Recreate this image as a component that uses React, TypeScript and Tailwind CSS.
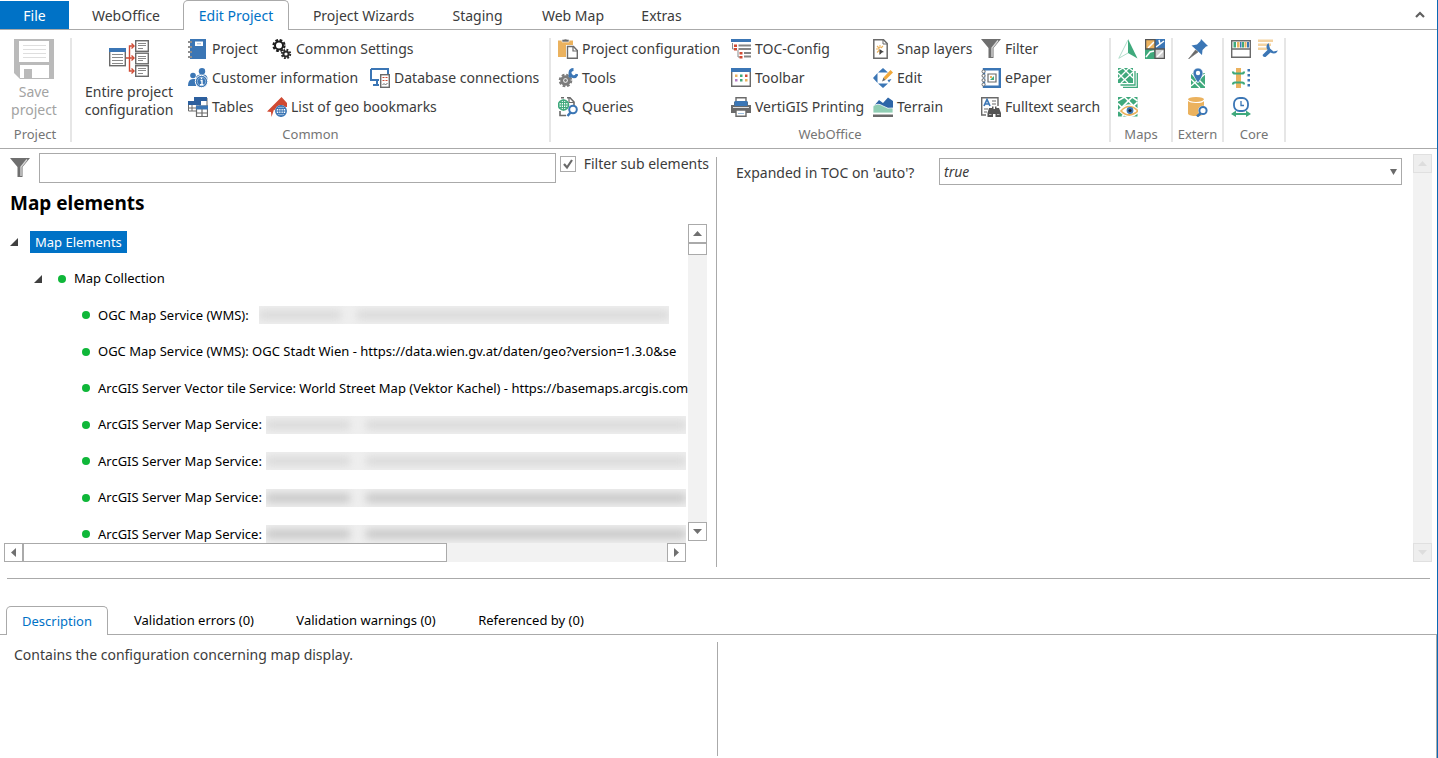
import React, { useState } from "react";

const BLUE = "#3b76b5";
const GRAY = "#6a6a6a";
const GREEN = "#3fa97c";
const ORANGE = "#ebb25e";
const RED = "#d04a33";

type Children = { children: React.ReactNode };

function Icon({ children }: Children) {
  return (
    <svg viewBox="0 0 20 20" className="size-5 shrink-0" aria-hidden="true">
      {children}
    </svg>
  );
}

function Gear({ cx, cy, r, color, dash }: { cx: number; cy: number; r: number; color: string; dash: string }) {
  return (
    <g fill="none" stroke={color}>
      <circle cx={cx} cy={cy} r={r} strokeWidth={2} />
      <circle cx={cx} cy={cy} r={r + 1.6} strokeWidth={2} strokeDasharray={dash} />
    </g>
  );
}

function SaveIcon() {
  return (
    <svg viewBox="0 0 40 40" className="size-10" aria-hidden="true">
      <path d="M0 0H40V40H6L0 34Z" fill="#bababa" />
      <path d="M5 2H35V23H5Z" fill="#fff" />
      <path d="M9 6.500H32M9 10.500H32M9 14.500H32M9 18.500H32" stroke="#dedede" strokeWidth="1.200" />
      <path d="M6 26H35V39H6Z" fill="#fff" />
      <path d="M10 30H18V39H10Z" fill="#bababa" />
    </svg>
  );
}

function TreeConfigIcon() {
  return (
    <svg viewBox="0 0 40 40" className="size-10" aria-hidden="true">
      <rect x="0.700" y="8.700" width="15.600" height="17" fill="#fff" stroke={GRAY} strokeWidth="1.400" />
      <path d="M0 8H17V12H0Z" fill={BLUE} />
      <path d="M3 14.500H14M3 17.500H14M3 20.500H14M3 23.500H14" stroke="#8a8a8a" />
      <g fill="none" stroke={RED} strokeWidth="1.400">
        <path d="M17 18H25M20.500 18V6H25M20.500 18V31H25" />
        <path d="M22.500 3.500L25 6L22.500 8.500M22.500 15.500L25 18L22.500 20.500M22.500 28.500L25 31L22.500 33.500" />
      </g>
      <g fill="#fff" stroke={GRAY} strokeWidth="1.400">
        <rect x="26.700" y="0.700" width="12.600" height="10.600" />
        <rect x="26.700" y="13.200" width="12.600" height="10.600" />
        <rect x="26.700" y="25.700" width="12.600" height="10.600" />
      </g>
      <path d="M29 3.500H37M29 5.500H37M29 8.500H34M29 16.500H37M29 18.500H37M29 20.500H34M29 28.500H37M29 30.500H37M29 33.500H34" stroke="#8a8a8a" />
    </svg>
  );
}

const MapTile = () => (
  <g>
    <path d="M0 0H15V15H0Z" fill={GREEN} />
    <path d="M0 3L5 0M0 11L11 0M3 15L15 4M0 5L10 15M5 0L15 10M11 0L15 3" stroke="#fff" strokeWidth="1.300" />
  </g>
);

const icons = {
  project: (
    <Icon>
      <path d="M2 0H18V20H2Z" fill={BLUE} />
      <path d="M7 2.500H15V7H7Z" fill="#fff" />
      <path d="M9 4.800H13" stroke="#9db9d8" />
      <path d="M2 2V4M2 7V9M2 12V14M2 17V19" stroke="#fff" strokeWidth="4" />
      <path d="M0 3H4M0 8H4M0 13H4M0 18H4" stroke={GRAY} strokeWidth="1.400" />
    </Icon>
  ),
  settings: (
    <Icon>
      <Gear cx={7} cy={6.5} r={4} color="#1c1c1c" dash="2.700 1.700" />
      <Gear cx={14} cy={15} r={2.6} color="#2a2a2a" dash="1.800 1.500" />
    </Icon>
  ),
  customer: (
    <Icon>
      <circle cx="14" cy="3.200" r="3.200" fill={BLUE} />
      <path d="M8 9Q9 6.500 12 6.500H16Q19.500 7 19.500 11V14H8Z" fill={BLUE} />
      <circle cx="5" cy="7.500" r="2.800" fill={BLUE} />
      <path d="M0 18Q0 11 5 11H8V18Z" fill={BLUE} />
      <circle cx="13.500" cy="13.500" r="6.200" fill={BLUE} stroke="#fff" />
      <circle cx="13.500" cy="13.500" r="4.200" fill="none" stroke="#9fc0e0" strokeWidth="0.800" />
      <path d="M12.500 12.500H14V16.500M12 16.700H15.500M13.500 9.500V11" stroke="#fff" strokeWidth="1.400" fill="none" />
    </Icon>
  ),
  database: (
    <Icon>
      <path d="M1 1H18V6M1 1V12H9M7 12V16M3 17H9" fill="none" stroke={BLUE} strokeWidth="2" />
      <rect x="10.700" y="6.700" width="8.600" height="12.600" fill="#fff" stroke={GRAY} strokeWidth="1.400" />
      <path d="M12.500 9.500H17.500M12.500 12.500H17.500" stroke={RED} strokeWidth="1.200" strokeDasharray="2 1" />
      <path d="M12.500 17L14 15.500L15.500 17L17.500 15" stroke={GRAY} fill="none" />
    </Icon>
  ),
  tables: (
    <Icon>
      <path d="M6.500 1H19V10H6.500Z" fill="#fff" stroke={GRAY} />
      <path d="M6 0H19V4H6Z" fill="#2c5f9e" />
      <path d="M0.500 5H12V14H0.500Z" fill="#fff" stroke={GRAY} />
      <path d="M0 4H13V8H0Z" fill="#2c5f9e" />
      <path d="M0 11H9M4 8V14" stroke={GRAY} />
      <path d="M8.500 9H19.500V19.500H8.500Z" fill="#fff" stroke={GRAY} strokeWidth="1.200" />
      <path d="M8 8.500H20V12.500H8Z" fill={BLUE} />
      <path d="M8 16H20M14 12V20" stroke={GRAY} strokeWidth="1.200" />
    </Icon>
  ),
  bookmark: (
    <Icon>
      <path d="M14.500 0L20 6V10L12 10L9 14L7 12.500L4.500 20L4 15L0 14.500Z" fill={RED} />
      <circle cx="14" cy="14" r="6" fill="#fff" />
      <circle cx="14" cy="14" r="5.200" fill="none" stroke={BLUE} strokeWidth="1.500" />
      <ellipse cx="14" cy="14" rx="2.300" ry="5.200" fill="none" stroke={BLUE} />
      <path d="M14 9V19M9 14H19M10 11.500H18M10 16.500H18" stroke={BLUE} strokeWidth="1.100" />
    </Icon>
  ),
  paste: (
    <Icon>
      <path d="M0 1.500H15V18H0Z" fill={ORANGE} />
      <path d="M4 3V1.500Q4 0 7.500 0Q11 0 11 1.500V3Z" fill={GRAY} stroke="#fff" strokeWidth="0.600" />
      <path d="M8 6H20V20H8Z" fill="#fff" />
      <path d="M9.500 7.500H15.500L19.300 11.500V19.300H9.500Z" fill="#fff" stroke={GRAY} strokeWidth="1.400" />
      <path d="M15 7.500V12H19.500" fill="none" stroke={GRAY} strokeWidth="1.200" />
    </Icon>
  ),
  tools: (
    <Icon>
      <circle cx="7.500" cy="12.500" r="3.800" fill="#fff" stroke="#7b7b7b" strokeWidth="3" />
      <circle cx="7.500" cy="12.500" r="5.800" fill="none" stroke="#7b7b7b" strokeWidth="2" strokeDasharray="2.700 1.860" />
      <circle cx="7.500" cy="12.500" r="1.400" fill="#7b7b7b" />
      <path d="M11 9L14 6" stroke={BLUE} strokeWidth="2.500" />
      <path d="M15.500 1.500A3.600 3.600 0 1 0 19 6" fill="none" stroke={BLUE} strokeWidth="2.800" />
    </Icon>
  ),
  queries: (
    <Icon>
      <path d="M9 0.800H12L16 5V9M2 14V18.500H8M3 0.800H6" fill="none" stroke={GRAY} strokeWidth="1.600" />
      <path d="M11 0.800V5.500H16" fill="none" stroke={GRAY} strokeWidth="1.200" />
      <circle cx="5.500" cy="8" r="5" fill="#fff" stroke={GREEN} strokeWidth="1.600" />
      <path d="M5.500 3V13M0.500 8H10.500M1.500 5.500H9.500M1.500 10.500H9.500" stroke={GREEN} />
      <ellipse cx="5.500" cy="8" rx="2.300" ry="5" fill="none" stroke={GREEN} />
      <circle cx="15" cy="12.500" r="3.800" fill="#fff" stroke={BLUE} strokeWidth="2" />
      <path d="M12.500 15.500L9.500 19" stroke={BLUE} strokeWidth="2.600" />
    </Icon>
  ),
  toc: (
    <Icon>
      <path d="M0 0H20V3H0Z" fill={BLUE} />
      <path d="M1.500 4V10H3M7 11V18H9" fill="none" stroke="#8a8a8a" />
      <path d="M7.500 6.500H20M7.500 10H20M13 14H20M13 17.500H20" stroke="#858585" strokeWidth="1.900" />
      <path d="M3 5.500H6V8H3ZM3 9H6V11.500H3ZM8.500 13H11.500V15.500H8.500ZM8.500 17H11.500V19.500H8.500Z" fill={RED} />
    </Icon>
  ),
  toolbar: (
    <Icon>
      <path d="M0.700 1H19.300V18.300H0.700Z" fill="#fff" stroke={GRAY} strokeWidth="1.400" />
      <path d="M0 0H20V4H0Z" fill={BLUE} />
      <path d="M4 6.500H6.500V9H4ZM14 11H16.500V13.500H14Z" fill={ORANGE} />
      <path d="M9 6.500H11.500V9H9ZM9 11H11.500V13.500H9Z" fill={GREEN} />
      <path d="M14 6.500H16.500V9H14Z" fill={RED} />
      <path d="M4 11H6.500V13.500H4Z" fill="#b57bc4" />
    </Icon>
  ),
  printer: (
    <Icon>
      <path d="M5 0.700H15V5H5Z" fill="#fff" stroke={GRAY} strokeWidth="1.400" />
      <path d="M0 8H3V5H17V8H20V16H0Z" fill={GRAY} />
      <path d="M3.500 4H16.500V9H3.500Z" fill={BLUE} />
      <path d="M2 10.500H18" stroke="#fff" strokeWidth="0.800" />
      <path d="M5 13H15V19.300H5Z" fill="#fff" stroke={GRAY} strokeWidth="1.400" />
      <path d="M7 16.500H13" stroke="#9fc0e0" />
    </Icon>
  ),
  snap: (
    <Icon>
      <path d="M0.800 0.800H10.500L14.200 4.500V19.200H0.800Z" fill="#fff" stroke={GRAY} strokeWidth="1.500" />
      <path d="M10 1V5H14" fill="none" stroke={GRAY} />
      <path d="M7 6V9M3 10H6M4 7L6.500 9.500M10 7L8 9M4 13.500L6.500 11M7 12V15" stroke={ORANGE} strokeWidth="1.100" />
      <path d="M6.500 10L11 13L9 13.500L6.500 16Z" fill="#444" />
    </Icon>
  ),
  edit: (
    <Icon>
      <path d="M10 0L15 4.500H5ZM0 10L4.500 5V15ZM10 20L5 15.500H15Z" fill={BLUE} />
      <path d="M18.500 11L16 14.500L14.500 12Z" fill={BLUE} />
      <path d="M10.500 9.500L17.500 2L20 4.500L12.500 12Z" fill="#f2a93b" />
      <path d="M10.500 9.500L12.500 12L9 13.500Z" fill={GRAY} />
    </Icon>
  ),
  terrain: (
    <Icon>
      <path d="M0 10L6 3L10 6L15 0.500L20 4V12H0Z" fill="#2e66a8" />
      <path d="M0 9Q5 5.500 10 9T20 11V16H0Z" fill="#8fcdb3" stroke="#fff" strokeWidth="0.800" />
      <path d="M0 17.500H20V20H0Z" fill={GRAY} />
    </Icon>
  ),
  filter: (
    <Icon>
      <path d="M0 0H20L12.500 9V19H7.500V9Z" fill="#6f6f6f" />
      <path d="M17 1.500L11 9V18" fill="none" stroke="#d5d5d5" strokeWidth="1.400" />
    </Icon>
  ),
  epaper: (
    <Icon>
      <path d="M3 1.200H18.800V18.800H3Z" fill="#fff" stroke={BLUE} strokeWidth="2.400" />
      <path d="M1 3.500H4M1 8H4M1 12H4M1 16.500H4" stroke="#fff" strokeWidth="3" />
      <g fill="#fff" stroke={GRAY}>
        <circle cx="2.500" cy="3.500" r="1.500" />
        <circle cx="2.500" cy="7.800" r="1.500" />
        <circle cx="2.500" cy="12.200" r="1.500" />
        <circle cx="2.500" cy="16.500" r="1.500" />
      </g>
      <path d="M7 6H15V14H7Z" fill="#fff" stroke={GRAY} strokeWidth="1.200" />
      <path d="M9 8H11V10H9Z" fill={ORANGE} />
      <path d="M11 10L13 8V12H9Z" fill={GREEN} />
    </Icon>
  ),
  fulltext: (
    <Icon>
      <path d="M17 9V0.700H0.700V18H5" fill="#fff" stroke={GRAY} strokeWidth="1.400" />
      <path d="M3 9L6 2.500L9 9M4 7H8" fill="none" stroke={BLUE} strokeWidth="1.700" />
      <path d="M11 4H15M11 7H15M3 12H7M3 15H6" stroke={GRAY} strokeWidth="1.100" />
      <path d="M8 11H11V9.500H12.500V12H14V9.500H15.500V11H18L20 16V20H14.500V17H12V20H6.500V16Z" fill="#555" />
      <path d="M8 17.500H10.500M16 17.500H18.500" stroke="#bbb" />
    </Icon>
  ),
  north: (
    <Icon>
      <path d="M10 0L19.500 19.500L10 14Z" fill={GREEN} />
      <path d="M10 1L0.800 19.300L10 14" fill="none" stroke="#a8d9c5" strokeWidth="0.900" />
    </Icon>
  ),
  mosaic: (
    <Icon>
      <path d="M0 0H10V10H0Z" fill={ORANGE} />
      <path d="M10 0H20V10H10Z" fill={BLUE} />
      <path d="M0 10H10V20H0Z" fill={GREEN} />
      <path d="M10 10H20V20H10Z" fill="#d0d0d0" />
      <path d="M3 9L9 3M11 8L15 5L14 1M15 5L19 2M1 18L5 13L9 12M12 18L18 12" stroke="#fff" strokeWidth="1.500" fill="none" />
      <path d="M0.600 0.600H10V10H0.600ZM10 10H19.400V19.400H10Z" fill="none" stroke="#555" strokeWidth="1.300" />
    </Icon>
  ),
  layers: (
    <Icon>
      <MapTile />
      <path d="M2.500 17H17V3M5 19.300H19.300V5" fill="none" stroke={GREEN} strokeWidth="1.300" />
    </Icon>
  ),
  mapEye: (
    <Icon>
      <g transform="scale(1.300)">
        <MapTile />
      </g>
      <path d="M3 14Q11 4 20 14Q11 23 3 14Z" fill="#fff" stroke="#fff" strokeWidth="3.500" />
      <path d="M3 14Q11 5 20 14Q11 22 3 14Z" fill="#fff" stroke={ORANGE} strokeWidth="1.700" />
      <circle cx="12" cy="13.500" r="3.400" fill={BLUE} />
      <circle cx="12" cy="13.500" r="1.600" fill="#222" />
    </Icon>
  ),
  pin: (
    <Icon>
      <path d="M13 0L20 7L18 7.500L14.500 11L14 16L3.500 6.500L9 5.500L12.500 2Z" fill={BLUE} />
      <path d="M7.500 11L0.500 20L10 13Z" fill={GRAY} stroke={GRAY} strokeWidth="0.600" />
    </Icon>
  ),
  mapPin: (
    <Icon>
      <path d="M3 5H17V20H3Z" fill={GREEN} />
      <path d="M3 11L12 20M3 18L17 6M9 10L17 18M3 5L7 9" stroke="#fff" strokeWidth="1.300" />
      <path d="M10 15Q5 8 5 5A5 5 0 0 1 15 5Q15 8 10 15Z" fill={BLUE} stroke="#fff" strokeWidth="0.700" />
      <circle cx="10" cy="5" r="2.200" fill="#fff" />
    </Icon>
  ),
  dbSearch: (
    <Icon>
      <path d="M0 2.500Q0 0 8 0T16 2.500V17Q14 19 8 19T0 17Z" fill={ORANGE} />
      <path d="M0 3Q1 5.500 8 5.500T16 3" fill="none" stroke="#fff" strokeWidth="1.200" />
      <circle cx="15" cy="13.500" r="4.800" fill="#fff" />
      <circle cx="15" cy="13.500" r="3.600" fill="#fff" stroke={BLUE} strokeWidth="2" />
      <path d="M12.500 16.500L9 19.500" stroke={BLUE} strokeWidth="2.600" />
    </Icon>
  ),
  palette: (
    <Icon>
      <path d="M0.700 1.700H19.300V18.300H0.700ZM0.700 10H19.300" fill="#fff" stroke={GRAY} strokeWidth="1.400" />
      <path d="M2.500 3H5V8.500H2.500ZM11 3H13V8.500H11Z" fill={GREEN} />
      <path d="M6 3H8.500V8.500H6Z" fill={ORANGE} />
      <path d="M9 3H10.500V8.500H9ZM16 3H18V8.500H16Z" fill={BLUE} />
      <path d="M13.500 3H15.500V8.500H13.500Z" fill={ORANGE} />
    </Icon>
  ),
  wrenchList: (
    <Icon>
      <path d="M0 0.500H15V3H0ZM0 4.500H13V7H0ZM0 8.500H9V11H0Z" fill="#f4d3a2" />
      <path d="M10.500 4Q7 7 9.500 11L4.500 16Q5 18.500 7.500 18L12.500 13.500Q18 16 20 11.500L15.500 12.500L12 9.500Z" fill={BLUE} />
    </Icon>
  ),
  align: (
    <Icon>
      <path d="M5 0H10V20H5Z" fill={ORANGE} />
      <path d="M2 3.500Q2 5.500 4 5.500H11Q13 5.500 13 3.500M2 16.500Q2 14.500 4 14.500H11Q13 14.500 13 16.500" fill="none" stroke={GREEN} strokeWidth="2.200" />
      <path d="M16.500 1H19V3.500H16.500ZM16.500 6H19V8.500H16.500ZM16.500 11H19V13.500H16.500ZM16.500 16H19V18.500H16.500Z" fill={BLUE} />
    </Icon>
  ),
  clock: (
    <Icon>
      <rect x="3" y="1" width="14" height="13" rx="5.500" fill="#fff" stroke={BLUE} strokeWidth="1.800" />
      <path d="M10 4V8.500H13" fill="none" stroke={BLUE} strokeWidth="1.300" />
      <path d="M4 17H16" stroke={GREEN} strokeWidth="2" />
      <path d="M0 17L5 13.500V20ZM20 17L15 13.500V20Z" fill={GREEN} />
    </Icon>
  ),
};

type IconName = keyof typeof icons;

function Tool({ icon, label, className = "" }: { icon: IconName; label: string; className?: string }) {
  return (
    <button type="button" className={`flex h-[22px] items-center gap-1 whitespace-nowrap text-[#3c3c3c] ${className}`}>
      {icons[icon]}
      <span>{label}</span>
    </button>
  );
}

function IconTool({ icon, label }: { icon: IconName; label: string }) {
  return (
    <button type="button" aria-label={label} className="flex h-[22px] w-[27px] items-center">
      {icons[icon]}
    </button>
  );
}

function Group({ title, className, children }: Children & { title: string; className: string }) {
  return (
    <section className={`flex shrink-0 flex-col border-r-2 border-[#e6e6e6] ${className}`}>
      <div className="flex h-[89px] items-start">{children}</div>
      <h2 className="text-center text-[13px] leading-[15px] text-[#757575]">{title}</h2>
    </section>
  );
}

type Direction = "up" | "down" | "left" | "right";
const arrows: Record<Direction, string> = {
  up: "M0 7L4.500 2L9 7Z",
  down: "M0 2H9L4.500 7Z",
  left: "M7 0V9L2 4.500Z",
  right: "M2 0L7 4.500L2 9Z",
};

function ScrollButton({ dir, disabled = false }: { dir: Direction; disabled?: boolean }) {
  return (
    <button
      type="button"
      aria-label={`Scroll ${dir}`}
      disabled={disabled}
      className="flex size-[19px] shrink-0 items-center justify-center border border-[#aaa] bg-white text-[#707070] disabled:border-[#e0e0e0] disabled:bg-[#eee] disabled:text-[#ddd]"
    >
      <svg viewBox="0 0 9 9" className="size-[9px]" aria-hidden="true">
        <path d={arrows[dir]} fill="currentColor" />
      </svg>
    </button>
  );
}

function Dot() {
  return <span className="mr-2 size-2 shrink-0 rounded-full bg-[#0fb739]" />;
}

function Expander() {
  return (
    <button type="button" aria-label="Collapse" className="flex w-5 shrink-0">
      <svg viewBox="0 0 8 8" className="size-2" aria-hidden="true">
        <path d="M8 0V8H0Z" fill="#404040" />
      </svg>
    </button>
  );
}

function Redacted({ className, dark = false }: { className: string; dark?: boolean }) {
  const tone = dark ? "bg-[#c2c2c2]" : "bg-[#d6d6d6]";
  return (
    <span className={`flex h-[18px] shrink-0 items-center overflow-hidden bg-[#efefef] ${className}`} aria-hidden="true">
      <span className="flex w-full gap-4 blur-[4px]">
        <span className={`h-2 w-1/5 ${tone}`} />
        <span className={`h-2 flex-1 ${tone}`} />
      </span>
    </span>
  );
}

type Leaf = { text: string; hidden?: string; dark?: boolean };

const leaves: Leaf[] = [
  { text: "OGC Map Service (WMS):", hidden: "ml-[10px] w-[410px]" },
  { text: "OGC Map Service (WMS): OGC Stadt Wien - https://data.wien.gv.at/daten/geo?version=1.3.0&se" },
  { text: "ArcGIS Server Vector tile Service: World Street Map (Vektor Kachel) - https://basemaps.arcgis.com" },
  { text: "ArcGIS Server Map Service:", hidden: "ml-1 w-[420px]" },
  { text: "ArcGIS Server Map Service:", hidden: "ml-1 w-[420px]" },
  { text: "ArcGIS Server Map Service:", hidden: "ml-1 w-[420px]", dark: true },
  { text: "ArcGIS Server Map Service:", hidden: "ml-1 w-[420px]", dark: true },
];

const ribbonTabs = [
  { name: "WebOffice", width: "w-[114px]" },
  { name: "Edit Project", width: "w-[106px]" },
  { name: "Project Wizards", width: "w-[149px]" },
  { name: "Staging", width: "w-[79px]" },
  { name: "Web Map", width: "w-[112px]" },
  { name: "Extras", width: "w-[65px]" },
];

const detailTabs = [
  { name: "Description", width: "w-[102px]" },
  { name: "Validation errors (0)", width: "w-[172px]" },
  { name: "Validation warnings (0)", width: "w-[172px]" },
  { name: "Referenced by (0)", width: "w-[158px]" },
];

const treeRow = "flex h-9 items-center whitespace-nowrap even:h-[37px]";

export default function App() {
  const [filterSub, setFilterSub] = useState(true);
  const [query, setQuery] = useState("");

  return (
    <div className="flex min-h-screen flex-col overflow-hidden border-r border-[#0a6ab5] bg-white font-['Noto_Sans','Open_Sans',sans-serif] text-sm text-[#3c3c3c]">
      <nav className="flex h-[30px] items-end border-b border-[#aaa]">
        <button type="button" className="h-7 w-[69px] bg-[#0072c6] pt-px text-white">
          File
        </button>
        {ribbonTabs.map((tab) => (
          <button
            key={tab.name}
            type="button"
            className={
              tab.name === "Edit Project"
                ? `-mb-px h-[30px] rounded-t-[5px] border border-b-0 border-[#aaa] bg-white text-[#0072c6] ${tab.width}`
                : `h-[27px] whitespace-nowrap ${tab.width}`
            }
          >
            {tab.name}
          </button>
        ))}
        <button type="button" aria-label="Collapse ribbon" className="mr-3 ml-auto flex h-[29px] w-[10px] items-center">
          <svg viewBox="0 0 10 7" className="h-[7px] w-[10px]" aria-hidden="true">
            <path d="M1 6L5 2L9 6" fill="none" stroke="#606060" strokeWidth="2.200" />
          </svg>
        </button>
      </nav>

      <div className="flex border-b border-[#aaa] pt-2 pb-[6px]">
        <Group title="Project" className="w-[72px]">
          <button type="button" disabled className="flex w-[68px] flex-col items-center pt-px leading-[18px] text-[#a3a3a3]">
            <SaveIcon />
            <span className="pt-1">Save<br />project</span>
          </button>
        </Group>

        <Group title="Common" className="w-[479px]">
          <button type="button" className="flex w-[116px] flex-col items-center pt-[2px] pr-[2px] leading-[18px]">
            <TreeConfigIcon />
            <span className="pt-[3px]">Entire project<br />configuration</span>
          </button>
          <div className="flex flex-col gap-[7px]">
            <div className="flex">
              <Tool icon="project" label="Project" className="w-[84px]" />
              <Tool icon="settings" label="Common Settings" />
            </div>
            <div className="flex">
              <Tool icon="customer" label="Customer information" className="w-[182px]" />
              <Tool icon="database" label="Database connections" />
            </div>
            <div className="flex">
              <Tool icon="tables" label="Tables" className="w-[79px]" />
              <Tool icon="bookmark" label="List of geo bookmarks" />
            </div>
          </div>
        </Group>

        <Group title="WebOffice" className="w-[560px]">
          <div className="grid grid-cols-[173px_142px_108px_120px] gap-y-[7px] pl-[7px]">
            <Tool icon="paste" label="Project configuration" />
            <Tool icon="toc" label="TOC-Config" />
            <Tool icon="snap" label="Snap layers" />
            <Tool icon="filter" label="Filter" />
            <Tool icon="tools" label="Tools" />
            <Tool icon="toolbar" label="Toolbar" />
            <Tool icon="edit" label="Edit" />
            <Tool icon="epaper" label="ePaper" />
            <Tool icon="queries" label="Queries" />
            <Tool icon="printer" label="VertiGIS Printing" />
            <Tool icon="terrain" label="Terrain" />
            <Tool icon="fulltext" label="Fulltext search" />
          </div>
        </Group>

        <Group title="Maps" className="w-[62px]">
          <div className="grid grid-cols-2 gap-y-[7px] pl-[7px]">
            <IconTool icon="north" label="North arrow" />
            <IconTool icon="mosaic" label="Map mosaic" />
            <div className="col-span-2"><IconTool icon="layers" label="Map layers" /></div>
            <IconTool icon="mapEye" label="Map views" />
          </div>
        </Group>

        <Group title="Extern" className="w-[51px]">
          <div className="flex flex-col gap-[7px] pl-[15px]">
            <IconTool icon="pin" label="Pin" />
            <IconTool icon="mapPin" label="Map location" />
            <IconTool icon="dbSearch" label="Database search" />
          </div>
        </Group>

        <Group title="Core" className="w-[62px]">
          <div className="grid grid-cols-2 gap-y-[7px] pl-[7px]">
            <IconTool icon="palette" label="Symbols" />
            <IconTool icon="wrenchList" label="Configure list" />
            <div className="col-span-2"><IconTool icon="align" label="Alignment" /></div>
            <IconTool icon="clock" label="Time range" />
          </div>
        </Group>
      </div>

      <main className="flex">
        <section className="flex w-[709px] shrink-0 flex-col pt-1 pb-[5px]">
          <div className="flex">
            <label htmlFor="element-filter" className="flex w-[39px] items-center pl-[10px]">
              {icons.filter}
            </label>
            <input
              id="element-filter"
              aria-label="Filter elements"
              value={query}
              onChange={(e) => setQuery(e.target.value)}
              className="h-[30px] min-w-0 flex-1 border border-[#aaa] px-2 outline-none"
            />
            <label className="ml-1 flex h-5 items-center gap-2 whitespace-nowrap pt-px">
              <span className="relative flex size-4">
                <input
                  type="checkbox"
                  checked={filterSub}
                  onChange={(e) => setFilterSub(e.target.checked)}
                  className="peer size-4 appearance-none border border-[#aaa] bg-white"
                />
                <svg viewBox="0 0 16 16" className="pointer-events-none absolute inset-0 hidden size-4 peer-checked:block" aria-hidden="true">
                  <path d="M4 8L7 11.500L12 4" fill="none" stroke="#6a6a6a" strokeWidth="2.200" />
                </svg>
              </span>
              Filter sub elements
            </label>
          </div>
          <h1 className="flex h-[41px] items-center pl-[10px] text-[19px] font-bold text-black">Map elements</h1>

          <div className="flex h-[319px] text-[13px] text-black">
            <div className="min-w-0 flex-1 overflow-hidden">
              <div className={`${treeRow} pl-[10px]`}>
                <Expander />
                <button type="button" className="h-[22px] bg-[#0072c6] px-[5px] leading-[22px] text-white">
                  Map Elements
                </button>
              </div>
              <div className={`${treeRow} pl-[34px]`}>
                <Expander />
                <span className="w-1" />
                <Dot />
                Map Collection
              </div>
              {leaves.map((leaf, i) => (
                <div key={i} className={`${treeRow} pl-[82px]`}>
                  <Dot />
                  {leaf.text}
                  {leaf.hidden && <Redacted className={leaf.hidden} dark={leaf.dark} />}
                </div>
              ))}
            </div>
            <div className="mr-[2px] flex h-[317px] w-[19px] shrink-0 flex-col bg-[#f2f2f2]">
              <ScrollButton dir="up" />
              <div className="h-3 w-[19px] border border-[#aaa] bg-white" />
              <div className="flex-1" />
              <ScrollButton dir="down" />
            </div>
          </div>

          <div className="mr-[23px] ml-1 flex h-[19px] bg-[#f2f2f2]">
            <ScrollButton dir="left" />
            <div className="w-[424px] border border-[#aaa] bg-white" />
            <div className="flex-1" />
            <ScrollButton dir="right" />
          </div>
        </section>

        <div className="mt-2 ml-[7px] w-px bg-[#aaa]" />

        <section className="flex min-w-0 flex-1 items-start pt-[5px] pl-[19px]">
          <label htmlFor="toc-expanded" className="w-[203px] shrink-0 pt-[9px]">
            Expanded in TOC on 'auto'?
          </label>
          <div className="relative mt-1 flex-1">
            <select id="toc-expanded" defaultValue="true" className="h-[27px] w-full appearance-none border border-[#aaa] bg-white px-1 italic outline-none">
              <option>true</option>
              <option>false</option>
            </select>
            <svg viewBox="0 0 7 6" className="pointer-events-none absolute top-[11px] right-[5px] h-[6px] w-[7px]" aria-hidden="true">
              <path d="M0 0H7L3.500 6Z" fill="#6a6a6a" />
            </svg>
          </div>
          <div className="mr-[5px] ml-[11px] flex h-[408px] w-[19px] flex-col justify-between bg-[#f2f2f2]">
            <ScrollButton dir="up" disabled />
            <ScrollButton dir="down" disabled />
          </div>
        </section>
      </main>

      <hr className="mx-[7px] mt-[11px] border-[#aaa]" />

      <div className="mt-[27px] flex h-[29px] items-end border-b border-[#aaa] pl-[6px] text-[13px] text-black">
        {detailTabs.map((tab) => (
          <button
            key={tab.name}
            type="button"
            className={
              tab.name === "Description"
                ? `-mb-px h-[29px] rounded-t-[5px] border border-b-0 border-[#aaa] bg-white text-[#0072c6] ${tab.width}`
                : `h-7 whitespace-nowrap ${tab.width}`
            }
          >
            {tab.name}
          </button>
        ))}
      </div>
      <div className="flex flex-1 border-r border-[#aaa] pt-[7px] pb-[2px]">
        <p className="w-[717px] pt-[3px] pl-[14px]">Contains the configuration concerning map display.</p>
        <div className="w-px bg-[#aaa]" />
      </div>
    </div>
  );
}
